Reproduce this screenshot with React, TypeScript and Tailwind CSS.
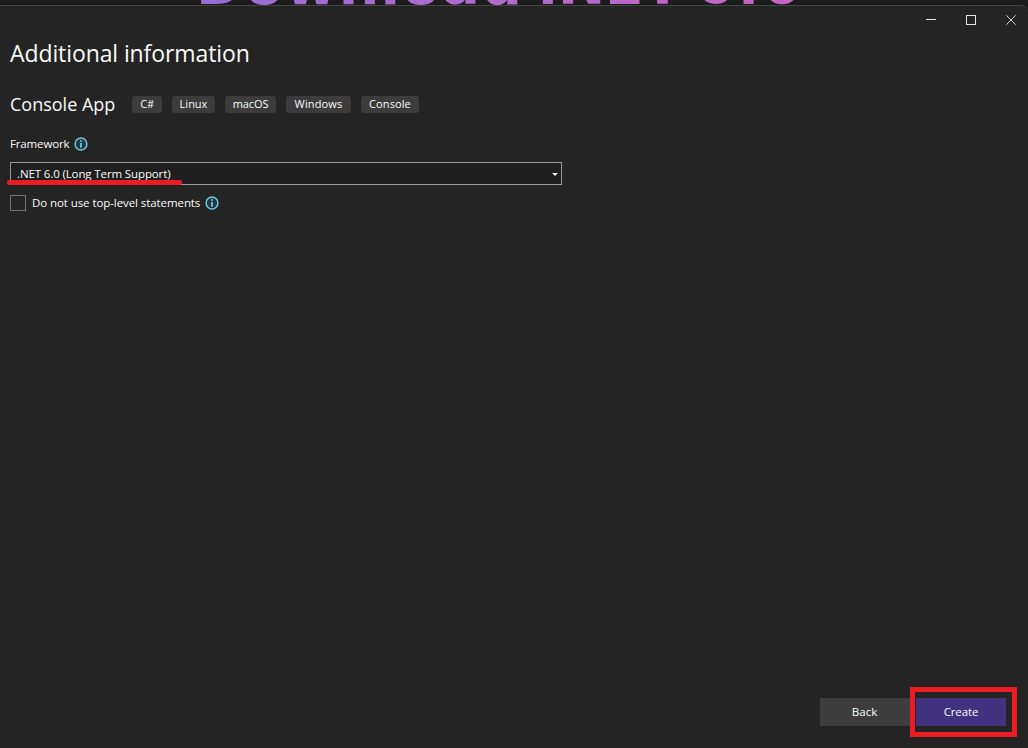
import React from "react";

const tags = [
  { label: "C#", box: "w-[30px]", text: "tracking-[-0.2px]" },
  { label: "Linux", box: "w-[43px]", text: "tracking-[0px]" },
  { label: "macOS", box: "w-[51px]", text: "tracking-[-0.1px]" },
  { label: "Windows", box: "w-[65px]", text: "tracking-[0.15px]" },
  { label: "Console", box: "w-[58px]", text: "tracking-[0.1px]" },
];

function InfoIcon() {
  return (
    <svg width="14" height="14" viewBox="0 0 14 14" className="shrink-0">
      <circle cx="7" cy="7" r="5.9" fill="#1f3a44" stroke="#72c5dc" strokeWidth="1.5" />
      <rect x="6.1" y="3.2" width="1.7" height="1.6" fill="#7fcfe4" />
      <rect x="6.1" y="6" width="1.7" height="4.6" fill="#7fcfe4" />
    </svg>
  );
}

export default function App() {
  return (
    <div className="flex h-[748px] w-[1028px] flex-col overflow-hidden bg-[#1c1c1c] font-['Open_Sans','Noto_Sans',sans-serif] text-[#fafafa]">
      <div className="relative h-[5px] shrink-0 overflow-hidden">
        <div className="absolute top-[-49px] left-[196px] flex h-[66px] w-[610px] whitespace-nowrap bg-linear-to-r from-[#946fd4] to-[#c864c4] bg-clip-text font-['DejaVu_Sans',sans-serif] text-[57px] leading-[66px] font-bold text-transparent">
          <span className="w-[341px] tracking-[1.2px]">Download</span>
          <span className="w-[158px] tracking-[-0.8px]">.NET</span>
          <span className="tracking-[3px]">6.0</span>
        </div>
      </div>
      <div className="flex min-h-0 flex-1 flex-col rounded-tr-[7px] border-t border-[#444444] bg-[#242424]">
        <header className="flex h-7 shrink-0 justify-end">
          <button aria-label="Minimize" className="flex w-10 items-center justify-center">
            <svg width="10" height="10"><path d="M0 4.5H10" stroke="#e4e4e4" /></svg>
          </button>
          <button aria-label="Maximize" className="flex w-10 items-center justify-center">
            <svg width="10" height="10"><rect x=".5" y=".5" width="9" height="9" fill="none" stroke="#e4e4e4" /></svg>
          </button>
          <button aria-label="Close" className="mr-[-3px] flex w-10 items-center justify-center">
            <svg width="10" height="10"><path d="M.3.3L9.7 9.7M9.7.3L.3 9.7" stroke="#d0d0d0" /></svg>
          </button>
        </header>
        <main className="flex flex-1 flex-col pl-[10px]">
          <h1 className="h-[38px] text-[23px] leading-[38px] tracking-[-0.1px] whitespace-nowrap">Additional information</h1>
          <div className="mt-[20px] flex h-6 items-center">
            <h2 className="w-[122px] text-[18px] leading-6 whitespace-nowrap">Console App</h2>
            <div className="flex gap-[10px]">
              {tags.map((t) => (
                <span key={t.label} className={`flex h-[17px] items-center justify-center rounded-[3px] bg-[#3c3c3c] text-[11px] leading-4 ${t.box} ${t.text}`}>{t.label}</span>
              ))}
            </div>
          </div>
          <div className="mt-[19px] flex h-[18px] items-center gap-[5px] text-[11.5px] leading-[18px]">
            <span className="w-[59px] tracking-[-0.15px] whitespace-nowrap">Framework</span>
            <InfoIcon />
          </div>
          <div className="relative mt-[9px] flex h-[23px] w-[552px] items-center justify-between border border-[#999999] bg-[#1f1f1f] pr-[3px] pl-[6px] text-[11.5px]">
            <span className="tracking-[-0.12px] whitespace-nowrap">.NET 6.0 (Long Term Support)</span>
            <svg width="6" height="3" className="mt-[2px]"><path d="M0 0H6L3 3Z" fill="#f0f0f0" /></svg>
            <div className="absolute top-[17px] left-[-4px] h-[5px] w-[175px] rounded-sm bg-[#ec1c24]" />
          </div>
          <div className="mt-[9px] flex h-[18px] items-center text-[11.5px]">
            <span className="h-4 w-4 border border-[#707070]" />
            <span className="ml-[6px] w-[173px] tracking-[-0.08px] whitespace-nowrap">Do not use top-level statements</span>
            <InfoIcon />
          </div>
        </main>
        <footer className="flex h-[61px] shrink-0 items-start justify-end pr-[11px] text-[11.5px]">
          <button className="mt-[11px] h-7 w-[90px] bg-[#3d3d3d] pr-px">Back</button>
          <div className="h-[50px] w-[107px] border-[5px] border-[#ec1c24] px-px pt-[6px]">
            <button className="h-7 w-[90px] bg-[#413280] tracking-[-0.1px]">Create</button>
          </div>
        </footer>
      </div>
    </div>
  );
}
